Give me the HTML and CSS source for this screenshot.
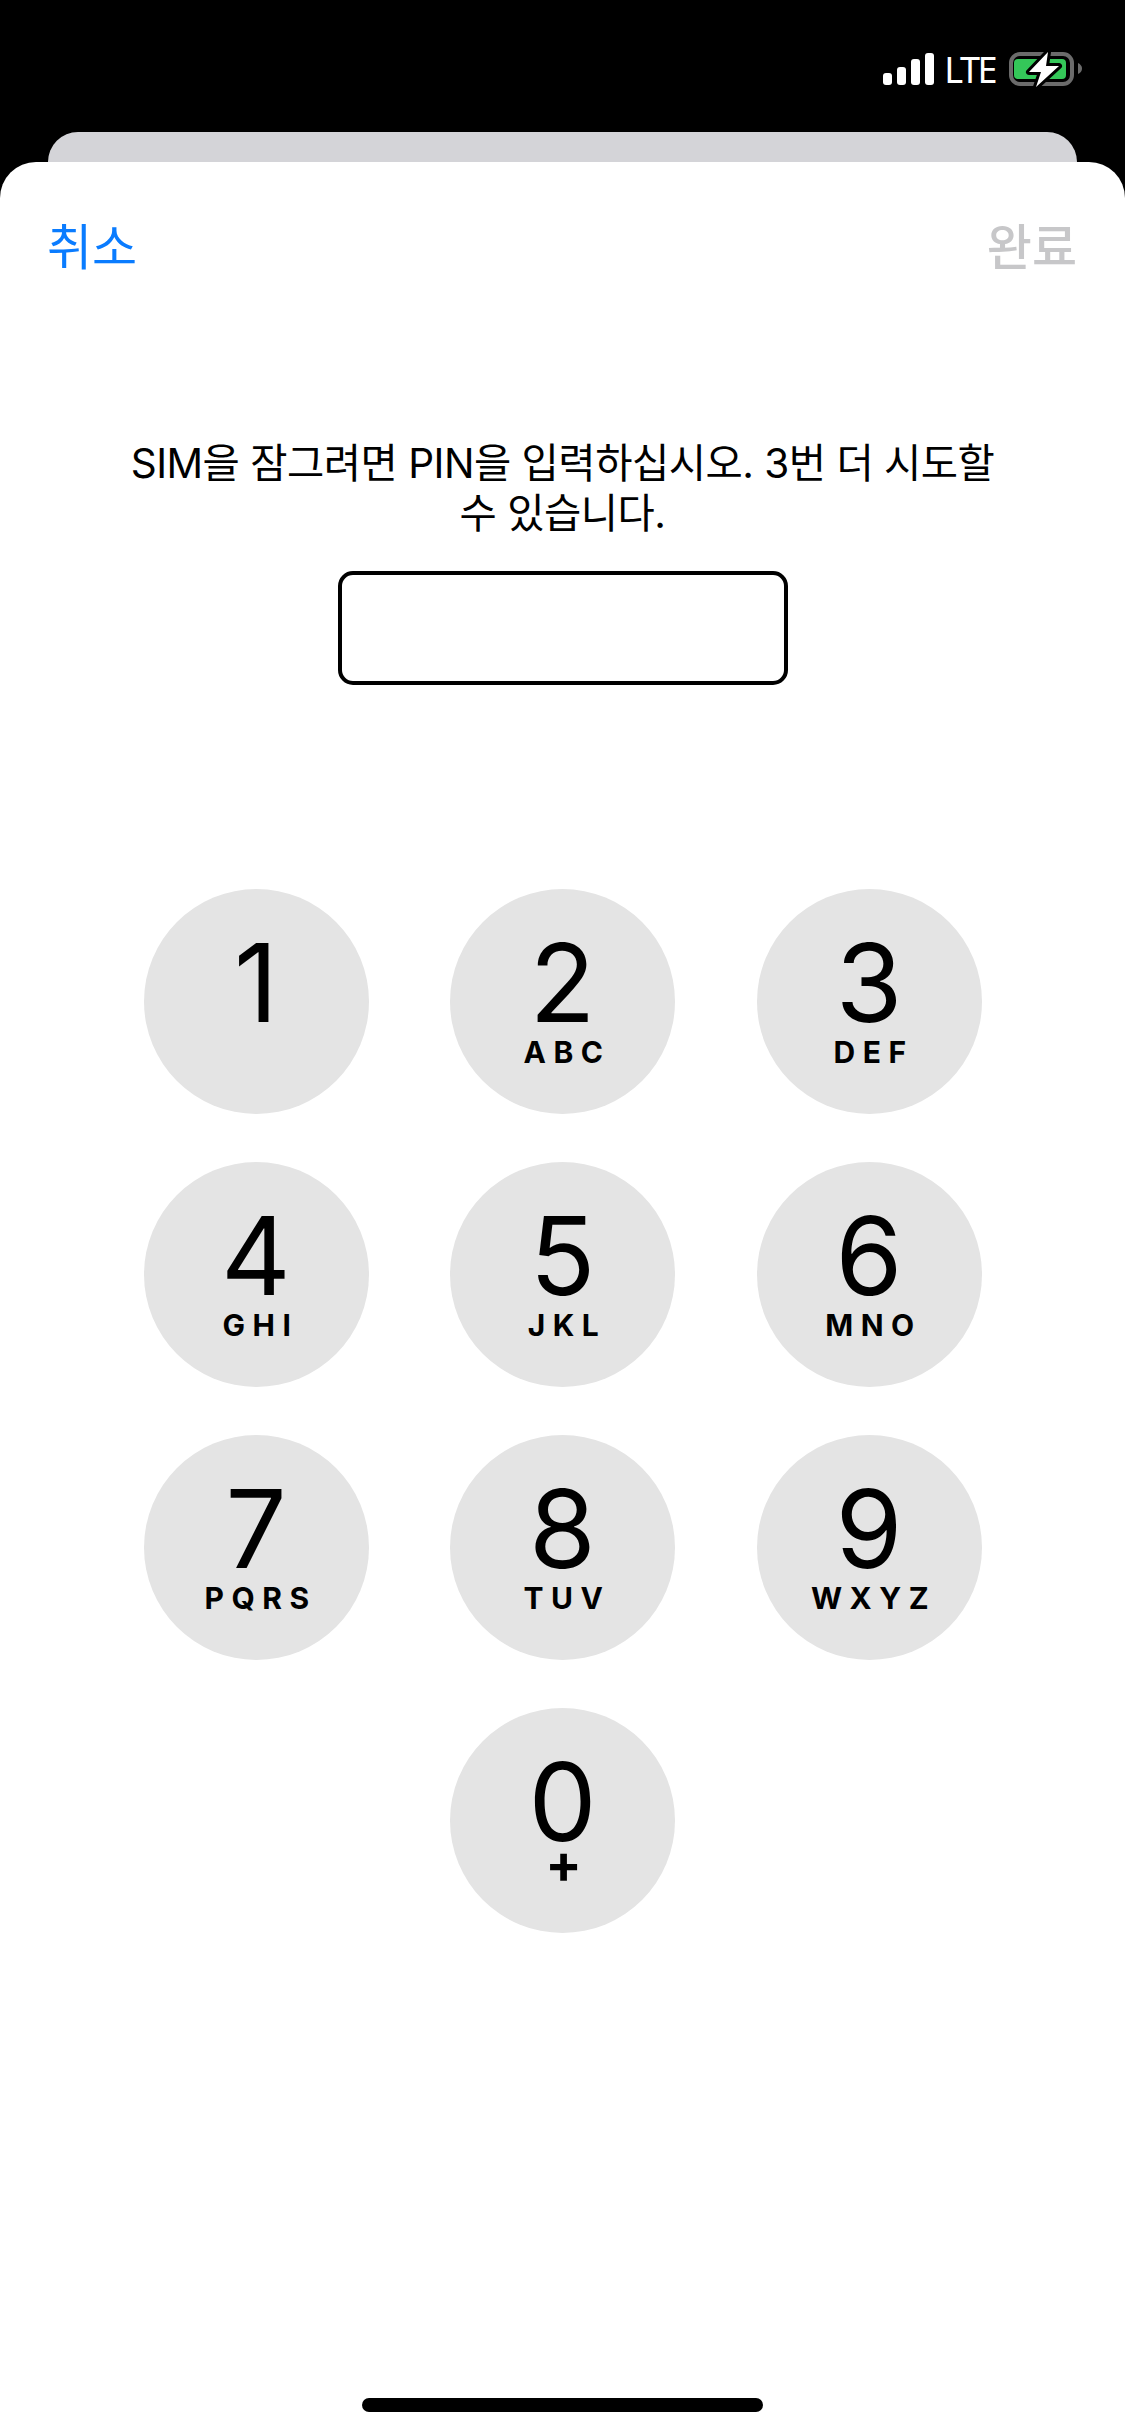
FILE: index.html
```html
<!DOCTYPE html>
<html lang="ko">
<head>
    <meta charset="UTF-8">
    <meta name="viewport" content="width=device-width, initial-scale=1.0">
    <title>SIM PIN</title>
    <link rel="stylesheet" href="styles.css">
</head>
<body>
    <div class="status-bar">
        <div class="signal"><span></span><span></span><span></span><span></span></div>
        <span class="network">LTE</span>
        <svg class="battery" width="73" height="36" viewBox="0 0 73 36">
            <rect x="2" y="2" width="61" height="30" rx="9" fill="none" stroke="#6b6b6b" stroke-width="4"/>
            <rect x="5" y="7" width="52" height="20" rx="4" fill="#34c759"/>
            <path d="M69 11 Q73 13 73 16.5 Q73 20 69 22 Z" fill="#6b6b6b"/>
            <path class="bolt" d="M39 0 L20 20 L32 20 L27 35 L50 14 L37 14 Z"/>
        </svg>
    </div>

    <div class="sheet-behind"></div>

    <div class="sheet">
        <div class="nav">
            <span class="nav-cancel">취소</span>
            <span class="nav-done">완료</span>
        </div>

        <p class="prompt">SIM을 잠그려면 PIN을 입력하십시오. 3번 더 시도할<br>수 있습니다.</p>
        <div class="pin-box"></div>

        <div class="keypad">
            <div class="key"><span class="digit">1</span></div>
            <div class="key"><span class="digit">2</span><span class="letters">ABC</span></div>
            <div class="key"><span class="digit">3</span><span class="letters">DEF</span></div>
            <div class="key"><span class="digit">4</span><span class="letters">GHI</span></div>
            <div class="key"><span class="digit">5</span><span class="letters">JKL</span></div>
            <div class="key"><span class="digit">6</span><span class="letters">MNO</span></div>
            <div class="key"><span class="digit">7</span><span class="letters">PQRS</span></div>
            <div class="key"><span class="digit">8</span><span class="letters">TUV</span></div>
            <div class="key"><span class="digit">9</span><span class="letters">WXYZ</span></div>
            <div class="key key-zero"><span class="digit">0</span><span class="letters plus">+</span></div>
        </div>

        <div class="home-indicator"></div>
    </div>
</body>
</html>
```

FILE: styles.css
```css
html, body {
    margin: 0;
    padding: 0;
}
body {
    width: 1125px;
    height: 2436px;
    overflow: hidden;
    background: #000;
    font-family: Inter, "Noto Sans CJK KR", sans-serif;
    color: #000;
}

/* status bar */
.status-bar {
    height: 132px;
    box-sizing: border-box;
    padding: 52px 43px 0 0;
    display: flex;
    justify-content: flex-end;
    align-items: flex-start;
}
.signal {
    display: flex;
    align-items: flex-end;
    gap: 5px;
    height: 32px;
    margin-top: 1px;
    margin-right: 10px;
}
.signal span {
    width: 9px;
    background: #fff;
    border-radius: 3px;
}
.signal span:nth-child(1) { height: 12px; }
.signal span:nth-child(2) { height: 18px; }
.signal span:nth-child(3) { height: 26px; }
.signal span:nth-child(4) { height: 32px; }
.network {
    font-family: "Noto Sans", sans-serif;
    font-size: 36px;
    line-height: 34px;
    letter-spacing: -2.5px;
    color: #fff;
    margin-top: 1px;
    margin-right: 14px;
}
.battery {
    overflow: visible;
}
.bolt {
    fill: #fff;
    stroke: #000;
    stroke-width: 6px;
    stroke-linejoin: round;
    paint-order: stroke;
}

/* cards */
.sheet-behind {
    height: 30px;
    margin: 0 48px;
    background: #d4d4d8;
    border-radius: 30px 30px 0 0;
}
.sheet {
    height: 2274px;
    box-sizing: border-box;
    padding-top: 56px;
    background: #fff;
    border-radius: 36px 36px 0 0;
    display: flex;
    flex-direction: column;
    align-items: center;
}
.nav {
    align-self: stretch;
    display: flex;
    justify-content: space-between;
    padding: 0 48px 0 47px;
    font-size: 49px;
    line-height: 60px;
}
.nav-cancel {
    color: #0a7cff;
}
.nav-done {
    color: #c7c7c9;
    font-weight: 500;
}
.prompt {
    margin: 161px 0 0;
    font-size: 40.5px;
    line-height: 50px;
    text-align: center;
    letter-spacing: -0.5px;
}
.pin-box {
    width: 450px;
    height: 114px;
    box-sizing: border-box;
    margin-top: 32px;
    border: 4px solid #000;
    border-radius: 15px;
}

/* keypad */
.keypad {
    display: grid;
    grid-template-columns: repeat(3, 225px);
    grid-auto-rows: 225px;
    column-gap: 81.5px;
    row-gap: 48px;
    margin-top: 204px;
}
.key {
    background: #e4e4e4;
    border-radius: 50%;
    display: flex;
    flex-direction: column;
    align-items: center;
}
.key-zero {
    grid-column: 2;
}
.digit {
    font-size: 108px;
    line-height: 107px;
    margin-top: 40px;
    font-weight: 400;
}
.letters {
    font-size: 30px;
    line-height: 30px;
    font-weight: 700;
    letter-spacing: 7.5px;
    margin-right: -9px;
    margin-top: 1px;
}
.plus {
    font-size: 54px;
    line-height: 30px;
    letter-spacing: 0;
    margin-right: -2px;
    margin-top: -6px;
}

.home-indicator {
    width: 401px;
    height: 14px;
    margin-top: auto;
    margin-bottom: 24px;
    background: #000;
    border-radius: 7px;
}
```
